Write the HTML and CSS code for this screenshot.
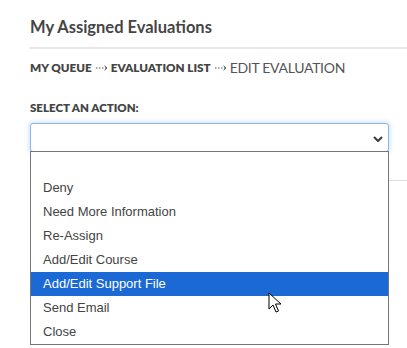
FILE: index.html
```html
<!DOCTYPE html>
<html>
<head>
<meta charset="utf-8">
<link rel="stylesheet" href="styles.css">
</head>
<body>
<div class="page">
  <h1 class="title">My Assigned Evaluations</h1>
  <div class="rule"></div>
  <nav class="crumbs">
    <span class="crumb">MY QUEUE</span>
    <svg class="sep" width="12" height="6" viewBox="0 0 12 6"><path d="M0 3h1.5M3 3h1.5M6 3h1.5M9 3h2" stroke="#555" stroke-width="1"/><path d="M8.5 0.8 L11 3 L8.5 5.2" fill="none" stroke="#555" stroke-width="1"/></svg>
    <span class="crumb">EVALUATION LIST</span>
    <svg class="sep" width="12" height="6" viewBox="0 0 12 6"><path d="M0 3h1.5M3 3h1.5M6 3h1.5M9 3h2" stroke="#555" stroke-width="1"/><path d="M8.5 0.8 L11 3 L8.5 5.2" fill="none" stroke="#555" stroke-width="1"/></svg>
    <span class="current">EDIT EVALUATION</span>
  </nav>
  <div class="label">SELECT AN ACTION:</div>
  <div class="select">
    <svg class="chev" width="10" height="6" viewBox="0 0 10 6"><path d="M1 1 L5 5 L9 1" fill="none" stroke="#3a3a3a" stroke-width="2"/></svg>
    <ul class="list">
      <li class="opt empty"></li>
      <li class="opt">Deny</li>
      <li class="opt">Need More Information</li>
      <li class="opt">Re-Assign</li>
      <li class="opt">Add/Edit Course</li>
      <li class="opt active">Add/Edit Support File</li>
      <li class="opt">Send Email</li>
      <li class="opt">Close</li>
    </ul>
  </div>
  <div class="rule2"></div>
</div>
<svg class="cursor" width="14" height="22" viewBox="0 0 14 22"><path d="M1 1 L1 17 L5 13 L8 20 L10.5 19 L7.5 12 L13 12 Z" fill="#fff" stroke="#000" stroke-width="1" stroke-linejoin="round"/></svg>
</body>
</html>
```
FILE: styles.css
```css
html, body { margin: 0; padding: 0; background: #fff; }
body { width: 407px; height: 348px; overflow: hidden; position: relative; font-family: "Lato", "Liberation Sans", sans-serif; color: #444; }
.page { padding-left: 30px; }
.title { margin: 0; padding-top: 17px; height: 30px; font-size: 16.5px; font-weight: 700; color: #454545; line-height: 20px; }
.rule { height: 2px; background: #e6e6e6; }
.crumbs { height: 19px; margin-top: 9px; display: flex; align-items: center; font-size: 11.7px; line-height: 19px; }
.crumb { font-weight: 800; color: #454545; }
.sep { margin: 0 3px 0 4px; }
.current { font-size: 14px; letter-spacing: -0.3px; color: #555; font-weight: 400; }
.label { margin-top: 23px; font-size: 11.5px; font-weight: 800; color: #454545; height: 15px; line-height: 15px; }
.select { position: relative; margin-top: 8px; width: 357px; height: 27px; border: 1px solid #8cb6ee; border-radius: 3px; box-shadow: 0 0 4px 1px rgba(110,170,240,0.35); background: #fff; }
.chev { position: absolute; right: 5px; top: 12px; }
.list { position: absolute; left: -1px; top: 27px; width: 357px; margin: 0; padding: 0; list-style: none; border: 1px solid #767676; background: #fff; z-index: 2; font-family: "Liberation Sans", Arial, sans-serif; font-size: 13px; color: #444; }
.opt { height: 24px; line-height: 24px; padding-left: 12px; }
.opt.empty { height: 24px; }
.opt.active { background: #1a69d4; color: #fff; }
.rule2 { margin-top: 28px; height: 1px; background: #dcdcdc; }
.cursor { position: absolute; left: 268px; top: 292px; z-index: 5; }
```
